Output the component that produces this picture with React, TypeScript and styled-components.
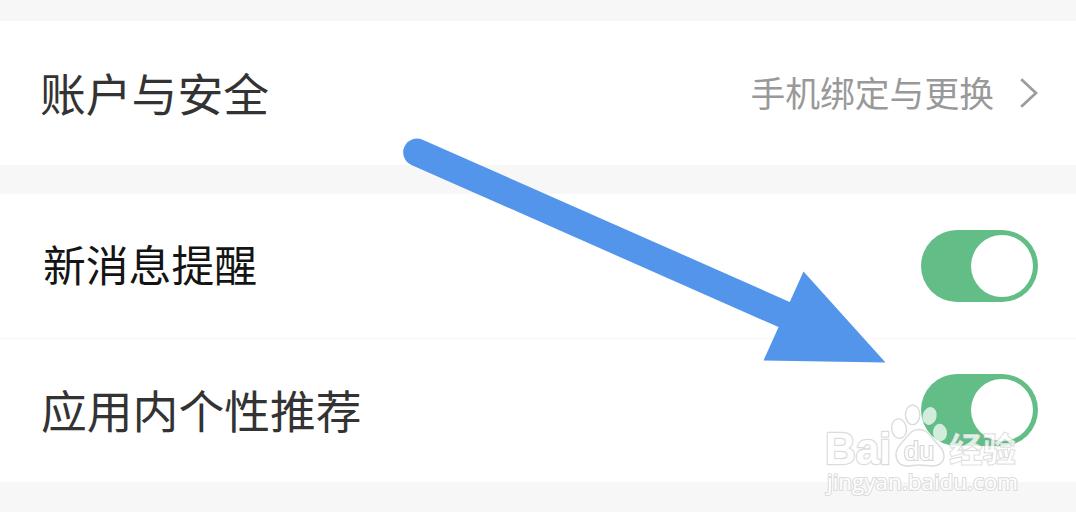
import React from 'react';
import styled, {createGlobalStyle} from 'styled-components';

export default function App() {
    return (
        <>
            <GlobalStyle/>
            <PageStyled>
                <GroupStyled>
                    <RowStyled>
                        <LabelStyled size={45.8} lift={3}>账户与安全</LabelStyled>
                        <LinkStyled>
                            <HintStyled>手机绑定与更换</HintStyled>
                            <Chevron/>
                        </LinkStyled>
                    </RowStyled>
                </GroupStyled>
                <GroupStyled>
                    <RowStyled>
                        <LabelStyled size={42.8} indent={3} lift={7} color={'#141414'}>新消息提醒</LabelStyled>
                        <SwitchStyled role="switch" aria-checked={true}><KnobStyled/></SwitchStyled>
                    </RowStyled>
                    <DividerStyled/>
                    <RowStyled>
                        <LabelStyled size={45.8} indent={1} lift={2}>应用内个性推荐</LabelStyled>
                        <SwitchStyled role="switch" aria-checked={true}><KnobStyled/></SwitchStyled>
                    </RowStyled>
                </GroupStyled>
                <Arrow/>
                <Watermark/>
            </PageStyled>
        </>
    );
}

const Chevron = () => (
    <ChevronStyled width="18" height="30" viewBox="0 0 18 30">
        <path d="M1.2 1.2 L16 15 L1.2 28.8" fill="none" stroke="#9c9c9c" strokeWidth="2.8"/>
    </ChevronStyled>
)

const Arrow = () => (
    <ArrowStyled width="490" height="230" viewBox="400 135 490 230">
        <path d="M417 152.3 L800 321.5" stroke="#5395ea" strokeWidth="27.6" strokeLinecap="round"/>
        <path d="M803.5 271.5 L885.5 362.5 L763.5 360.5 Z" fill="#5395ea"/>
    </ArrowStyled>
)

const Watermark = () => (
    <WatermarkStyled width="210" height="104" viewBox="816 398 210 104">
        <g fill="#fff" fillOpacity="0.72" stroke="#dcdcdc" strokeWidth="1.4">
            <ellipse cx="899" cy="428.6" rx="7.4" ry="9.8" transform="rotate(-8 899 428.6)"/>
            <ellipse cx="912.6" cy="414.8" rx="7.2" ry="9.8"/>
            <ellipse cx="929.6" cy="416" rx="7" ry="9" stroke="none" transform="rotate(14 929.6 416)"/>
            <ellipse cx="940" cy="432.6" rx="7" ry="8.8" stroke="none" transform="rotate(-6 940 432.6)"/>
            <path d="M919 429.5 C926 429.5 929 434 933 439 C937 444 944 448 944 456 C944 463 938 466.5 931 466 C926 465.6 923 465 919 465 C914 465 911 466.4 906 466 C899 465.4 896 461 896 454 C896 447 901 444 905 439 C909 434 912 429.5 919 429.5 Z"/>
        </g>
        <BrandStyled x="825" y="464.2" textLength="66" lengthAdjust="spacingAndGlyphs">Bai</BrandStyled>
        <PawTextStyled x="904" y="460" textLength="30" lengthAdjust="spacingAndGlyphs">du</PawTextStyled>
        <NameStyled x="949" y="462" textLength="67" lengthAdjust="spacingAndGlyphs">经验</NameStyled>
        <AddressStyled x="827" y="490" textLength="191" lengthAdjust="spacingAndGlyphs">jingyan.baidu.com</AddressStyled>
    </WatermarkStyled>
)

const GlobalStyle = createGlobalStyle`
  * {
    box-sizing: border-box;
  }

  body {
    margin: 0;
    background-color: #fff;
    font-family: 'Noto Sans CJK SC', sans-serif;
  }
`

const PageStyled = styled.div`
  position: relative;
  display: flex;
  flex-direction: column;
  gap: 29px;
  width: 1076px;
  height: 512px;
  padding-top: 21px;
  background-color: #f7f7f7;
`

const GroupStyled = styled.section`
  display: flex;
  flex-direction: column;
  background-color: #fff;
`

const RowStyled = styled.div`
  display: flex;
  align-items: center;
  justify-content: space-between;
  height: 144px;
  padding: 0 38px 0 40px;
`

const DividerStyled = styled.div`
  height: 1px;
  margin-bottom: -1px;
  background-color: #f7f7f7;
`

const LabelStyled = styled.span<{ size: number, lift: number, indent?: number, color?: string }>`
  margin-left: ${props => props.indent || 0}px;
  padding-bottom: ${props => props.lift}px;
  color: ${props => props.color || '#333'};
  font-size: ${props => props.size}px;
  line-height: 60px;
  white-space: nowrap;
`

const LinkStyled = styled.div`
  display: flex;
  align-items: center;
  gap: 26px;
`

const HintStyled = styled.span`
  padding-bottom: 2px;
  color: #999;
  font-size: 34.8px;
  line-height: 50px;
  white-space: nowrap;
`

const ChevronStyled = styled.svg`
  display: block;
`

const SwitchStyled = styled.div`
  display: flex;
  align-items: center;
  justify-content: flex-end;
  width: 117px;
  height: 72px;
  padding-right: 5px;
  border-radius: 36px;
  background-color: #62bd87;
`

const KnobStyled = styled.div`
  width: 62px;
  height: 62px;
  border-radius: 50%;
  background-color: #fff;
`

const ArrowStyled = styled.svg`
  position: absolute;
  top: 135px;
  left: 400px;
`

const WatermarkStyled = styled.svg`
  position: absolute;
  top: 398px;
  left: 816px;
`

const BrandStyled = styled.text`
  fill: #fff;
  stroke: #dcdcdc;
  stroke-width: 2.6px;
  stroke-linejoin: round;
  paint-order: stroke;
  font-family: 'Liberation Sans', sans-serif;
  font-size: 45px;
  font-weight: 700;
`

const PawTextStyled = styled.text`
  fill: #fff;
  stroke: #d6d6d6;
  stroke-width: 2.2px;
  paint-order: stroke;
  font-family: 'Liberation Sans', sans-serif;
  font-size: 26px;
`

const NameStyled = styled.text`
  fill: rgba(255, 255, 255, 0.78);
  stroke: rgba(130, 130, 130, 0.25);
  stroke-width: 1.2px;
  font-family: 'Noto Sans CJK SC', sans-serif;
  font-size: 34px;
  font-weight: 900;
`

const AddressStyled = styled.text`
  fill: #fff;
  stroke: #dcdcdc;
  stroke-width: 2.2px;
  paint-order: stroke;
  font-family: 'Open Sans', sans-serif;
  font-size: 22px;
  font-weight: 500;
`
